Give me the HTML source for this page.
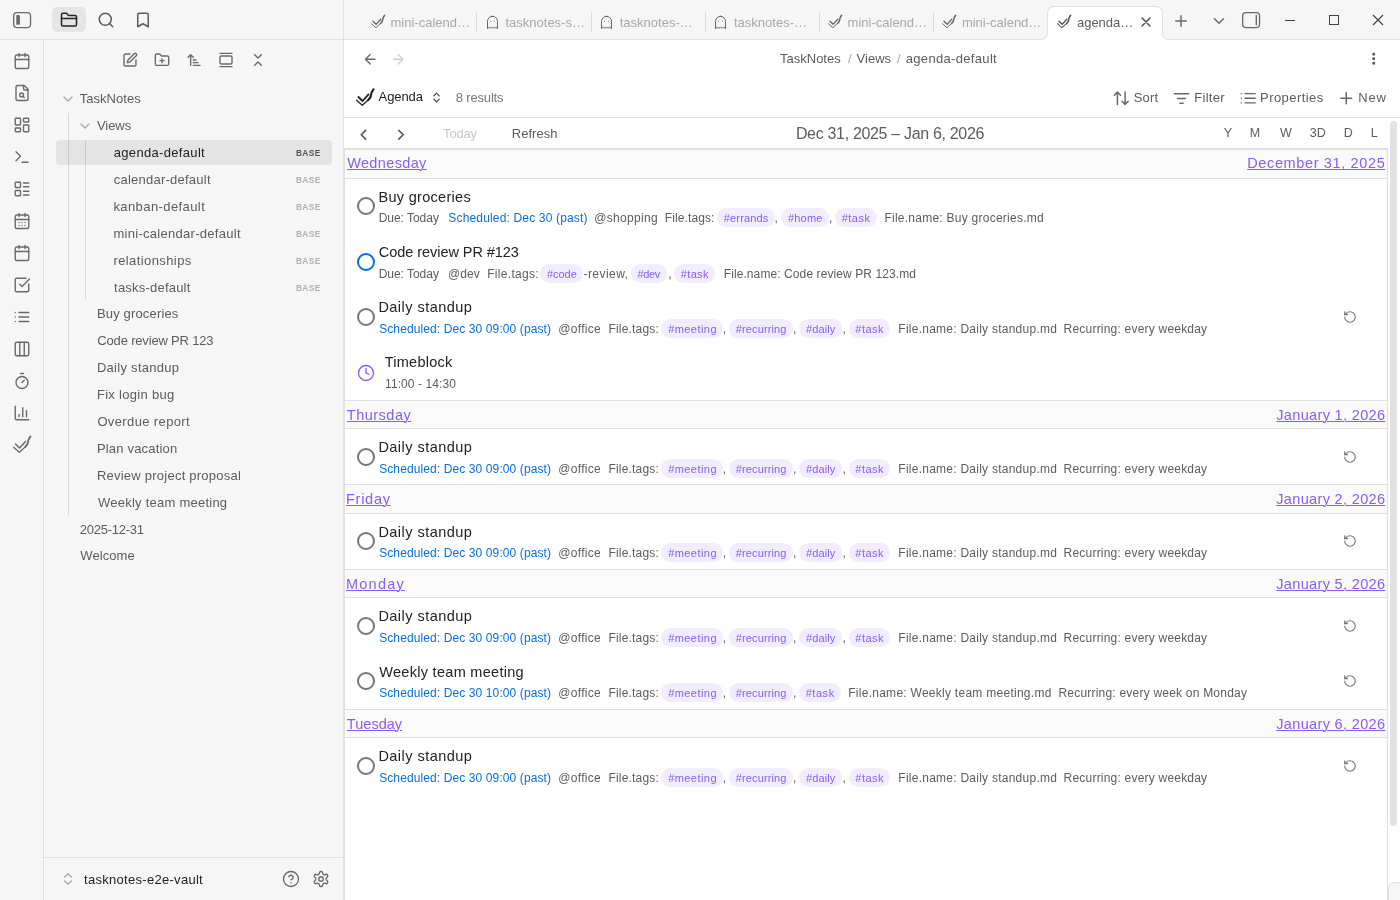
<!DOCTYPE html>
<html lang="en"><head><meta charset="utf-8"><title>agenda-default - TaskNotes</title>
<style>
*{margin:0;padding:0;box-sizing:border-box}
html,body{width:1400px;height:900px;overflow:hidden;background:#fff;font-family:"Liberation Sans",sans-serif}
.a{position:absolute}
.t{position:absolute;white-space:nowrap;line-height:1}
svg.i{position:absolute;fill:none;stroke:currentColor;stroke-linecap:round;stroke-linejoin:round;overflow:visible}
</style></head><body><div class="app" style="position:absolute;left:0;top:0;width:1400px;height:900px;overflow:hidden;will-change:transform">
<div class="a" style="left:0px;top:0px;width:344px;height:900px;background:#f6f6f6"></div>
<div class="a" style="left:344px;top:0px;width:1056px;height:40px;background:#f6f6f6"></div>
<div class="a" style="left:0px;top:39px;width:1400px;height:1px;background:#e0e0e0"></div>
<div class="a" style="left:43px;top:40px;width:1px;height:860px;background:#e0e0e0"></div>
<div class="a" style="left:343px;top:0px;width:1px;height:900px;background:#e0e0e0"></div>
<div class="a" style="left:44px;top:857px;width:299px;height:1px;background:#e0e0e0"></div>
<svg class="i" style="left:13px;top:12px;color:#6a6a6a" width="18" height="16" viewBox="0 0 18 16"><rect x="0.65" y="0.65" width="16.9" height="14.9" rx="3.2" stroke-width="1.3"/><rect x="3.3" y="3.1" width="3.6" height="9.7" rx="0.9" fill="#6a6a6a" stroke="none"/></svg>
<div class="a" style="left:52px;top:7px;width:34px;height:25px;background:#e5e5e5;border-radius:5px"></div>
<svg class="i" style="left:60px;top:11px;color:#222;" width="18" height="18" viewBox="0 0 24 24" stroke-width="2"><path d="M20 20a2 2 0 0 0 2-2V8a2 2 0 0 0-2-2h-7.9a2 2 0 0 1-1.69-.9L9.6 3.9A2 2 0 0 0 7.93 3H4a2 2 0 0 0-2 2v13a2 2 0 0 0 2 2Z"/><path d="M2 10h20"/></svg>
<svg class="i" style="left:97px;top:11px;color:#5c5c5c;" width="18" height="18" viewBox="0 0 24 24" stroke-width="2"><circle cx="11" cy="11" r="8"/><path d="m21 21-4.3-4.3"/></svg>
<svg class="i" style="left:134px;top:11px;color:#5c5c5c;" width="18" height="18" viewBox="0 0 24 24" stroke-width="2"><path d="m19 21-7-4-7 4V5a2 2 0 0 1 2-2h10a2 2 0 0 1 2 2v16z"/></svg>
<svg class="i" style="left:13px;top:51.5px;color:#6a6a6a;" width="18" height="18" viewBox="0 0 24 24" stroke-width="1.85"><rect x="3" y="4" width="18" height="18" rx="2"/><path d="M16 2v4M8 2v4M3 10h18"/></svg>
<svg class="i" style="left:13px;top:83.5px;color:#6a6a6a;" width="18" height="18" viewBox="0 0 24 24" stroke-width="1.85"><path d="M15 2H6a2 2 0 0 0-2 2v16a2 2 0 0 0 2 2h12a2 2 0 0 0 2-2V7Z"/><path d="M14 2v4a2 2 0 0 0 2 2h4"/><circle cx="11.5" cy="14.5" r="2.5"/><path d="M13.3 16.3 15 18"/></svg>
<svg class="i" style="left:13px;top:115.5px;color:#6a6a6a;" width="18" height="18" viewBox="0 0 24 24" stroke-width="1.85"><rect x="3" y="3" width="7" height="9" rx="1"/><rect x="14" y="3" width="7" height="5" rx="1"/><rect x="14" y="12" width="7" height="9" rx="1"/><rect x="3" y="16" width="7" height="5" rx="1"/></svg>
<svg class="i" style="left:13px;top:147.5px;color:#6a6a6a;" width="18" height="18" viewBox="0 0 24 24" stroke-width="1.85"><path d="M4 17l6-6-6-6M12 19h8"/></svg>
<svg class="i" style="left:13px;top:179.5px;color:#6a6a6a;" width="18" height="18" viewBox="0 0 24 24" stroke-width="1.85"><rect x="3" y="3" width="7" height="7" rx="1"/><rect x="3" y="14" width="7" height="7" rx="1"/><path d="M14 4h7M14 9h7M14 15h7M14 20h7"/></svg>
<svg class="i" style="left:13px;top:211.5px;color:#6a6a6a;" width="18" height="18" viewBox="0 0 24 24" stroke-width="1.85"><rect x="3" y="4" width="18" height="18" rx="2"/><path d="M16 2v4M8 2v4M3 10h18"/><path d="M8 14h.01M12 14h.01M16 14h.01M8 18h.01M12 18h.01M16 18h.01"/></svg>
<svg class="i" style="left:13px;top:243.5px;color:#6a6a6a;" width="18" height="18" viewBox="0 0 24 24" stroke-width="1.85"><rect x="3" y="4" width="18" height="18" rx="2"/><path d="M16 2v4M8 2v4M3 10h18"/></svg>
<svg class="i" style="left:13px;top:275.5px;color:#6a6a6a;" width="18" height="18" viewBox="0 0 24 24" stroke-width="1.85"><path d="M21 10.5V19a2 2 0 0 1-2 2H5a2 2 0 0 1-2-2V5a2 2 0 0 1 2-2h12.5"/><path d="m9 11 3 3L22 4"/></svg>
<svg class="i" style="left:13px;top:307.5px;color:#6a6a6a;" width="18" height="18" viewBox="0 0 24 24" stroke-width="1.85"><path d="M3 12h.01M3 18h.01M3 6h.01M8 12h13M8 18h13M8 6h13"/></svg>
<svg class="i" style="left:13px;top:339.5px;color:#6a6a6a;" width="18" height="18" viewBox="0 0 24 24" stroke-width="1.85"><rect x="3" y="3" width="18" height="18" rx="2"/><path d="M9 3v18M15 3v18"/></svg>
<svg class="i" style="left:13px;top:371.5px;color:#6a6a6a;" width="18" height="18" viewBox="0 0 24 24" stroke-width="1.85"><path d="M10 2h4M12 14l3-3"/><circle cx="12" cy="14" r="8"/></svg>
<svg class="i" style="left:13px;top:403.5px;color:#6a6a6a;" width="18" height="18" viewBox="0 0 24 24" stroke-width="1.85"><path d="M3 3v16a2 2 0 0 0 2 2h16M18 17V9M13 17V5M8 17v-3"/></svg>
<svg class="i" style="left:13px;top:436.2px;color:#6a6a6a" width="18" height="17.00" viewBox="0 0 18 17"><path d="M0.6 11.2 L6.3 16.3 L12.5 10.7" stroke-width="1.20"/><path d="M12.3 10.9 C14.2 9.0 15.1 7.6 15.0 6.0 C14.9 4.6 15.6 2.9 17.5 0.4" stroke-width="1.87"/><path d="M2.5 8.0 L6.6 12.0 L12.5 5.4" stroke-width="1.53"/></svg>
<svg class="i" style="left:122.1px;top:51.8px;color:#6a6a6a;" width="16" height="16" viewBox="0 0 24 24" stroke-width="2.1"><path d="M12 3H5a2 2 0 0 0-2 2v14a2 2 0 0 0 2 2h14a2 2 0 0 0 2-2v-7"/><path d="M18.375 2.625a1 1 0 0 1 3 3l-9.013 9.014a2 2 0 0 1-.853.505l-2.873.84a.5.5 0 0 1-.62-.62l.84-2.873a2 2 0 0 1 .506-.852z"/></svg>
<svg class="i" style="left:154.1px;top:51.8px;color:#6a6a6a;" width="16" height="16" viewBox="0 0 24 24" stroke-width="2.1"><path d="M12 10v6M9 13h6"/><path d="M20 20a2 2 0 0 0 2-2V8a2 2 0 0 0-2-2h-7.9a2 2 0 0 1-1.69-.9L9.6 3.9A2 2 0 0 0 7.93 3H4a2 2 0 0 0-2 2v13a2 2 0 0 0 2 2Z"/></svg>
<svg class="i" style="left:186.1px;top:51.8px;color:#6a6a6a;" width="16" height="16" viewBox="0 0 24 24" stroke-width="2.1"><path d="m3 8 4-4 4 4M7 4v16M11 12h4M11 16h7M11 20h10"/></svg>
<svg class="i" style="left:218.1px;top:51.8px;color:#6a6a6a;" width="16" height="16" viewBox="0 0 24 24" stroke-width="2.1"><path d="M3 2h18M3 22h18"/><rect x="3" y="6" width="18" height="12" rx="2"/></svg>
<svg class="i" style="left:250.1px;top:51.8px;color:#6a6a6a;" width="16" height="16" viewBox="0 0 24 24" stroke-width="2.1"><path d="m7 20 5-5 5 5M7 4l5 5 5-5"/></svg>
<svg class="i" style="left:60px;top:91.3px;color:#b0b0b0;" width="16" height="16" viewBox="0 0 24 24" stroke-width="2.3"><path d="m6 9 6 6 6-6"/></svg>
<div class="t" style="left:79.71px;top:91.99px;font-size:13px;color:#5c5c5c;letter-spacing:0.041px;">TaskNotes</div>
<svg class="i" style="left:77px;top:118.3px;color:#b0b0b0;" width="16" height="16" viewBox="0 0 24 24" stroke-width="2.3"><path d="m6 9 6 6 6-6"/></svg>
<div class="t" style="left:96.94px;top:118.99px;font-size:13px;color:#5c5c5c;letter-spacing:-0.063px;">Views</div>
<div class="a" style="left:56px;top:140px;width:276px;height:25px;background:#e4e4e4;border-radius:4px"></div>
<div class="a" style="left:68px;top:113px;width:1px;height:402px;background:rgba(0,0,0,0.12)"></div>
<div class="a" style="left:85px;top:140px;width:1px;height:159px;background:rgba(0,0,0,0.12)"></div>
<div class="t" style="left:113.75px;top:145.59px;font-size:13px;color:#222222;letter-spacing:0.324px;">agenda-default</div>
<div class="t" style="left:295.94px;top:149.17px;font-size:8.3px;color:#555;letter-spacing:0.44px;font-weight:700;">BASE</div>
<div class="t" style="left:113.75px;top:172.59px;font-size:13px;color:#5c5c5c;letter-spacing:0.235px;">calendar-default</div>
<div class="t" style="left:295.94px;top:176.17px;font-size:8.3px;color:#b0b0b0;letter-spacing:0.44px;font-weight:700;">BASE</div>
<div class="t" style="left:113.42px;top:199.59px;font-size:13px;color:#5c5c5c;letter-spacing:0.412px;">kanban-default</div>
<div class="t" style="left:295.94px;top:203.17px;font-size:8.3px;color:#b0b0b0;letter-spacing:0.44px;font-weight:700;">BASE</div>
<div class="t" style="left:113.44px;top:226.59px;font-size:13px;color:#5c5c5c;letter-spacing:0.283px;">mini-calendar-default</div>
<div class="t" style="left:295.94px;top:230.17px;font-size:8.3px;color:#b0b0b0;letter-spacing:0.44px;font-weight:700;">BASE</div>
<div class="t" style="left:113.44px;top:253.59px;font-size:13px;color:#5c5c5c;letter-spacing:0.404px;">relationships</div>
<div class="t" style="left:295.94px;top:257.17px;font-size:8.3px;color:#b0b0b0;letter-spacing:0.44px;font-weight:700;">BASE</div>
<div class="t" style="left:114.10px;top:280.59px;font-size:13px;color:#5c5c5c;letter-spacing:0.207px;">tasks-default</div>
<div class="t" style="left:295.94px;top:284.17px;font-size:8.3px;color:#b0b0b0;letter-spacing:0.44px;font-weight:700;">BASE</div>
<div class="t" style="left:96.93px;top:307.19px;font-size:13px;color:#5c5c5c;letter-spacing:0.163px;">Buy groceries</div>
<div class="t" style="left:97.34px;top:334.19px;font-size:13px;color:#5c5c5c;letter-spacing:-0.176px;">Code review PR 123</div>
<div class="t" style="left:96.93px;top:361.19px;font-size:13px;color:#5c5c5c;letter-spacing:0.279px;">Daily standup</div>
<div class="t" style="left:96.93px;top:388.19px;font-size:13px;color:#5c5c5c;letter-spacing:0.3px;">Fix login bug</div>
<div class="t" style="left:97.38px;top:415.19px;font-size:13px;color:#5c5c5c;letter-spacing:0.375px;">Overdue report</div>
<div class="t" style="left:96.93px;top:442.19px;font-size:13px;color:#5c5c5c;letter-spacing:0.188px;">Plan vacation</div>
<div class="t" style="left:96.93px;top:469.19px;font-size:13px;color:#5c5c5c;letter-spacing:0.236px;">Review project proposal</div>
<div class="t" style="left:97.94px;top:496.19px;font-size:13px;color:#5c5c5c;letter-spacing:0.245px;">Weekly team meeting</div>
<div class="t" style="left:79.75px;top:522.89px;font-size:13px;color:#5c5c5c;letter-spacing:-0.245px;">2025-12-31</div>
<div class="t" style="left:80.34px;top:548.59px;font-size:13px;color:#5c5c5c;letter-spacing:0.076px;">Welcome</div>
<svg class="i" style="left:60px;top:871px;color:#ababab;" width="16" height="16" viewBox="0 0 24 24" stroke-width="2"><path d="m7 15 5 5 5-5M7 9l5-5 5 5"/></svg>
<div class="t" style="left:84.10px;top:872.99px;font-size:13px;color:#222222;letter-spacing:0.286px;">tasknotes-e2e-vault</div>
<svg class="i" style="left:282px;top:870px;color:#6a6a6a;" width="18" height="18" viewBox="0 0 24 24" stroke-width="1.8"><circle cx="12" cy="12" r="10"/><path d="M9.09 9a3 3 0 0 1 5.83 1c0 2-3 3-3 3M12 17h.01"/></svg>
<svg class="i" style="left:312px;top:870px;color:#6a6a6a;" width="18" height="18" viewBox="0 0 24 24" stroke-width="1.8"><path d="M12.22 2h-.44a2 2 0 0 0-2 2v.18a2 2 0 0 1-1 1.73l-.43.25a2 2 0 0 1-2 0l-.15-.08a2 2 0 0 0-2.73.73l-.22.38a2 2 0 0 0 .73 2.73l.15.1a2 2 0 0 1 1 1.72v.51a2 2 0 0 1-1 1.74l-.15.09a2 2 0 0 0-.73 2.73l.22.38a2 2 0 0 0 2.73.73l.15-.08a2 2 0 0 1 2 0l.43.25a2 2 0 0 1 1 1.73V20a2 2 0 0 0 2 2h.44a2 2 0 0 0 2-2v-.18a2 2 0 0 1 1-1.73l.43-.25a2 2 0 0 1 2 0l.15.08a2 2 0 0 0 2.73-.73l.22-.39a2 2 0 0 0-.73-2.73l-.15-.08a2 2 0 0 1-1-1.74v-.5a2 2 0 0 1 1-1.74l.15-.09a2 2 0 0 0 .73-2.73l-.22-.38a2 2 0 0 0-2.73-.73l-.15.08a2 2 0 0 1-2 0l-.43-.25a2 2 0 0 1-1-1.73V4a2 2 0 0 0-2-2z"/><circle cx="12" cy="12" r="3"/></svg>
<svg class="i" style="left:371.0px;top:15.1px;color:#666" width="14" height="13.22" viewBox="0 0 18 17"><path d="M0.6 11.2 L6.3 16.3 L12.5 10.7" stroke-width="1.22"/><path d="M12.3 10.9 C14.2 9.0 15.1 7.6 15.0 6.0 C14.9 4.6 15.6 2.9 17.5 0.4" stroke-width="2.05"/><path d="M2.5 8.0 L6.6 12.0 L12.5 5.4" stroke-width="1.68"/></svg>
<div class="t" style="left:390.54px;top:15.89px;font-size:13px;color:#a8a8a8;">mini-calend…</div>
<div class="a" style="left:476px;top:12px;width:1px;height:20px;background:#dadada"></div>
<svg class="i" style="left:484.57px;top:14.6px;color:#666;" width="15" height="15" viewBox="0 0 24 24" stroke-width="1.6"><path d="M9 10h.01M15 10h.01"/><path d="M12 2a8 8 0 0 0-8 8v12l3-3 2.5 2.5L12 19l2.5 2.5L17 19l3 3V10a8 8 0 0 0-8-8z"/></svg>
<div class="t" style="left:505.47px;top:15.89px;font-size:13px;color:#a8a8a8;">tasknotes-s…</div>
<div class="a" style="left:591px;top:12px;width:1px;height:20px;background:#dadada"></div>
<svg class="i" style="left:598.84px;top:14.6px;color:#666;" width="15" height="15" viewBox="0 0 24 24" stroke-width="1.6"><path d="M9 10h.01M15 10h.01"/><path d="M12 2a8 8 0 0 0-8 8v12l3-3 2.5 2.5L12 19l2.5 2.5L17 19l3 3V10a8 8 0 0 0-8-8z"/></svg>
<div class="t" style="left:619.74px;top:15.89px;font-size:13px;color:#a8a8a8;">tasknotes-…</div>
<div class="a" style="left:705px;top:12px;width:1px;height:20px;background:#dadada"></div>
<svg class="i" style="left:713.1100000000001px;top:14.6px;color:#666;" width="15" height="15" viewBox="0 0 24 24" stroke-width="1.6"><path d="M9 10h.01M15 10h.01"/><path d="M12 2a8 8 0 0 0-8 8v12l3-3 2.5 2.5L12 19l2.5 2.5L17 19l3 3V10a8 8 0 0 0-8-8z"/></svg>
<div class="t" style="left:734.01px;top:15.89px;font-size:13px;color:#a8a8a8;">tasknotes-…</div>
<div class="a" style="left:819px;top:12px;width:1px;height:20px;background:#dadada"></div>
<svg class="i" style="left:828.08px;top:15.1px;color:#666" width="14" height="13.22" viewBox="0 0 18 17"><path d="M0.6 11.2 L6.3 16.3 L12.5 10.7" stroke-width="1.22"/><path d="M12.3 10.9 C14.2 9.0 15.1 7.6 15.0 6.0 C14.9 4.6 15.6 2.9 17.5 0.4" stroke-width="2.05"/><path d="M2.5 8.0 L6.6 12.0 L12.5 5.4" stroke-width="1.68"/></svg>
<div class="t" style="left:847.62px;top:15.89px;font-size:13px;color:#a8a8a8;">mini-calend…</div>
<div class="a" style="left:933px;top:12px;width:1px;height:20px;background:#dadada"></div>
<svg class="i" style="left:942.35px;top:15.1px;color:#666" width="14" height="13.22" viewBox="0 0 18 17"><path d="M0.6 11.2 L6.3 16.3 L12.5 10.7" stroke-width="1.22"/><path d="M12.3 10.9 C14.2 9.0 15.1 7.6 15.0 6.0 C14.9 4.6 15.6 2.9 17.5 0.4" stroke-width="2.05"/><path d="M2.5 8.0 L6.6 12.0 L12.5 5.4" stroke-width="1.68"/></svg>
<div class="t" style="left:961.89px;top:15.89px;font-size:13px;color:#a8a8a8;">mini-calend…</div>
<div class="a" style="left:1040px;top:33px;width:8px;height:7px;background:#fff"></div>
<div class="a" style="left:1040px;top:33px;width:8px;height:7px;background:#f6f6f6;border-right:1px solid #e0e0e0;border-bottom:1px solid #e0e0e0;border-bottom-right-radius:7px;box-sizing:border-box"></div>
<div class="a" style="left:1162px;top:33px;width:8px;height:7px;background:#fff"></div>
<div class="a" style="left:1162px;top:33px;width:8px;height:7px;background:#f6f6f6;border-left:1px solid #e0e0e0;border-bottom:1px solid #e0e0e0;border-bottom-left-radius:7px;box-sizing:border-box"></div>
<div class="a" style="left:1047px;top:6px;width:116px;height:28px;background:#fff;border:1px solid #e0e0e0;border-bottom:none;border-radius:7px 7px 0 0;box-sizing:border-box"></div>
<div class="a" style="left:1048px;top:33px;width:114px;height:7px;background:#fff"></div>
<svg class="i" style="left:1057px;top:15.1px;color:#555" width="14" height="13.22" viewBox="0 0 18 17"><path d="M0.6 11.2 L6.3 16.3 L12.5 10.7" stroke-width="1.29"/><path d="M12.3 10.9 C14.2 9.0 15.1 7.6 15.0 6.0 C14.9 4.6 15.6 2.9 17.5 0.4" stroke-width="2.12"/><path d="M2.5 8.0 L6.6 12.0 L12.5 5.4" stroke-width="1.74"/></svg>
<div class="t" style="left:1077.05px;top:15.89px;font-size:13px;color:#5c5c5c;letter-spacing:-0.044px;">agenda…</div>
<svg class="i" style="left:1138px;top:14px;color:#444;" width="16" height="16" viewBox="0 0 24 24" stroke-width="2"><path d="M18 6 6 18M6 6l12 12"/></svg>
<svg class="i" style="left:1172px;top:12px;color:#6a6a6a;" width="18" height="18" viewBox="0 0 24 24" stroke-width="2"><path d="M5 12h14M12 5v14"/></svg>
<svg class="i" style="left:1210px;top:12px;color:#6a6a6a;" width="18" height="18" viewBox="0 0 24 24" stroke-width="2"><path d="m6 9 6 6 6-6"/></svg>
<svg class="i" style="left:1242px;top:12px;color:#6a6a6a" width="18" height="16" viewBox="0 0 18 16"><rect x="0.65" y="0.65" width="16.9" height="14.9" rx="3.2" stroke-width="1.3"/><path d="M14.3 3.4v9.3" stroke-width="1.4"/></svg>
<div class="a" style="left:1285px;top:20px;width:10px;height:1px;background:#444"></div>
<div class="a" style="left:1329px;top:15px;width:10px;height:10px;border:1px solid #444;box-sizing:border-box"></div>
<svg class="i" style="left:1372px;top:14px;color:#444" width="12" height="12" viewBox="0 0 12 12"><path d="M1 1 11 11M11 1 1 11" stroke-width="1.2" stroke-linecap="butt"/></svg>
<svg class="i" style="left:361.7px;top:50.5px;color:#6a6a6a;" width="16.5" height="16.5" viewBox="0 0 24 24" stroke-width="1.9"><path d="m12 19-7-7 7-7M19 12H5"/></svg>
<svg class="i" style="left:389.7px;top:50.5px;color:#cfcfcf;" width="16.5" height="16.5" viewBox="0 0 24 24" stroke-width="1.9"><path d="M5 12h14M12 5l7 7-7 7"/></svg>
<div class="t" style="left:780.01px;top:51.99px;font-size:13px;color:#5c5c5c;letter-spacing:0.004px;">TaskNotes</div>
<div class="t" style="left:848.00px;top:51.99px;font-size:13px;color:#ababab;">/</div>
<div class="t" style="left:856.54px;top:51.99px;font-size:13px;color:#5c5c5c;letter-spacing:0.037px;">Views</div>
<div class="t" style="left:896.90px;top:51.99px;font-size:13px;color:#ababab;">/</div>
<div class="t" style="left:905.75px;top:51.99px;font-size:13px;color:#5c5c5c;letter-spacing:0.324px;">agenda-default</div>
<svg class="i" style="left:1366.25px;top:51.3px;color:#555;" width="15.5" height="15.5" viewBox="0 0 24 24" stroke-width="2.6"><circle cx="12" cy="12" r="1"/><circle cx="12" cy="5" r="1"/><circle cx="12" cy="19" r="1"/></svg>
<svg class="i" style="left:356px;top:89px;color:#222" width="18" height="17.00" viewBox="0 0 18 17"><path d="M0.6 11.2 L6.3 16.3 L12.5 10.7" stroke-width="1.30"/><path d="M12.3 10.9 C14.2 9.0 15.1 7.6 15.0 6.0 C14.9 4.6 15.6 2.9 17.5 0.4" stroke-width="2.20"/><path d="M2.5 8.0 L6.6 12.0 L12.5 5.4" stroke-width="1.80"/></svg>
<div class="t" style="left:378.57px;top:90.49px;font-size:13px;color:#222222;letter-spacing:-0.079px;">Agenda</div>
<svg class="i" style="left:430.4px;top:91.4px;color:#444;" width="13" height="13" viewBox="0 0 24 24" stroke-width="2.3"><path d="m7 15 5 5 5-5M7 9l5-5 5 5"/></svg>
<div class="t" style="left:455.74px;top:90.79px;font-size:13px;color:#777777;letter-spacing:-0.162px;">8 results</div>
<div class="a" style="left:344px;top:117px;width:1056px;height:1px;background:#e0e0e0"></div>
<svg class="i" style="left:1111.8px;top:89px;color:#666;" width="18.5" height="18.5" viewBox="0 0 24 24" stroke-width="1.9"><path d="m21 16-4 4-4-4M17 20V4M3 8l4-4 4 4M7 4v16"/></svg>
<div class="t" style="left:1133.71px;top:90.99px;font-size:13px;color:#5c5c5c;letter-spacing:0.148px;">Sort</div>
<svg class="i" style="left:1172.2px;top:88.6px;color:#666;" width="19" height="19" viewBox="0 0 24 24" stroke-width="1.9"><path d="M3 6h18M7 12h10M10 18h4"/></svg>
<div class="t" style="left:1194.33px;top:90.99px;font-size:13px;color:#5c5c5c;letter-spacing:0.259px;">Filter</div>
<svg class="i" style="left:1238.6px;top:88.8px;color:#666;" width="18.5" height="18.5" viewBox="0 0 24 24" stroke-width="1.9"><path d="M3 12h.01M3 18h.01M3 6h.01M8 12h13M8 18h13M8 6h13"/></svg>
<div class="t" style="left:1260.03px;top:90.99px;font-size:13px;color:#5c5c5c;letter-spacing:0.443px;">Properties</div>
<svg class="i" style="left:1337px;top:89px;color:#666;" width="18.5" height="18.5" viewBox="0 0 24 24" stroke-width="1.9"><path d="M5 12h14M12 5v14"/></svg>
<div class="t" style="left:1358.23px;top:90.99px;font-size:13px;color:#5c5c5c;letter-spacing:0.864px;">New</div>
<svg class="i" style="left:353.9px;top:124.7px;color:#555;stroke-linecap:butt;stroke-linejoin:miter;" width="19.5" height="19.5" viewBox="0 0 24 24" stroke-width="1.9"><path d="m15 18-6-6 6-6"/></svg>
<svg class="i" style="left:390.8px;top:124.7px;color:#555;stroke-linecap:butt;stroke-linejoin:miter;" width="19.5" height="19.5" viewBox="0 0 24 24" stroke-width="1.9"><path d="m9 18 6-6-6-6"/></svg>
<div class="t" style="left:443.11px;top:126.99px;font-size:13px;color:#c8c8c8;letter-spacing:-0.203px;">Today</div>
<div class="t" style="left:511.83px;top:126.99px;font-size:13px;color:#5c5c5c;letter-spacing:0.015px;">Refresh</div>
<div class="t" style="left:795.89px;top:125.65px;font-size:16px;color:#5c5c5c;letter-spacing:-0.323px;">Dec 31, 2025 – Jan 6, 2026</div>
<div class="t" style="left:1223.63px;top:127.12px;font-size:12.5px;color:#5c5c5c;">Y</div>
<div class="t" style="left:1249.87px;top:127.12px;font-size:12.5px;color:#5c5c5c;">M</div>
<div class="t" style="left:1279.95px;top:127.12px;font-size:12.5px;color:#5c5c5c;">W</div>
<div class="t" style="left:1309.82px;top:127.12px;font-size:12.5px;color:#5c5c5c;">3D</div>
<div class="t" style="left:1343.67px;top:127.12px;font-size:12.5px;color:#5c5c5c;">D</div>
<div class="t" style="left:1370.67px;top:127.12px;font-size:12.5px;color:#5c5c5c;">L</div>
<div class="a" style="left:344px;top:148px;width:1044px;height:2px;background:#e0e0e0"></div>
<div class="a" style="left:344px;top:150px;width:1px;height:750px;background:#e0e0e0"></div>
<div class="a" style="left:1387px;top:150px;width:1px;height:750px;background:#e0e0e0"></div>
<div class="a" style="left:1390px;top:121px;width:7px;height:705px;background:#e2e2e2;border-radius:4px"></div>
<div class="a" style="left:1388px;top:882px;width:12px;height:18px;background:#f6f6f6;border-top:1px solid #e0e0e0;border-left:1px solid #e0e0e0;border-top-left-radius:7px;box-sizing:border-box"></div>
<div class="a" style="left:345px;top:150px;width:1042px;height:28px;background:#fafafa"></div>
<div class="a" style="left:345px;top:178px;width:1042px;height:1px;background:#e0e0e0"></div>
<div class="t" style="left:347.14px;top:156.42px;font-size:14.5px;color:#8a5cf5;letter-spacing:0.365px;text-decoration:underline;text-underline-offset:1px;text-decoration-thickness:1px;">Wednesday</div>
<div class="t" style="left:1247.21px;top:156.42px;font-size:14.5px;color:#8a5cf5;letter-spacing:0.634px;text-decoration:underline;text-underline-offset:1px;text-decoration-thickness:1px;">December 31, 2025</div>
<div class="a" style="left:345px;top:400px;width:1042px;height:1px;background:#e0e0e0"></div>
<div class="a" style="left:345px;top:401px;width:1042px;height:27px;background:#fafafa"></div>
<div class="a" style="left:345px;top:428px;width:1042px;height:1px;background:#e0e0e0"></div>
<div class="t" style="left:346.87px;top:407.72px;font-size:14.5px;color:#8a5cf5;letter-spacing:0.487px;text-decoration:underline;text-underline-offset:1px;text-decoration-thickness:1px;">Thursday</div>
<div class="t" style="left:1276.27px;top:407.72px;font-size:14.5px;color:#8a5cf5;letter-spacing:0.341px;text-decoration:underline;text-underline-offset:1px;text-decoration-thickness:1px;">January 1, 2026</div>
<div class="a" style="left:345px;top:484px;width:1042px;height:1px;background:#e0e0e0"></div>
<div class="a" style="left:345px;top:485px;width:1042px;height:28px;background:#fafafa"></div>
<div class="a" style="left:345px;top:513px;width:1042px;height:1px;background:#e0e0e0"></div>
<div class="t" style="left:346.01px;top:491.92px;font-size:14.5px;color:#8a5cf5;letter-spacing:0.726px;text-decoration:underline;text-underline-offset:1px;text-decoration-thickness:1px;">Friday</div>
<div class="t" style="left:1276.27px;top:491.92px;font-size:14.5px;color:#8a5cf5;letter-spacing:0.341px;text-decoration:underline;text-underline-offset:1px;text-decoration-thickness:1px;">January 2, 2026</div>
<div class="a" style="left:345px;top:569px;width:1042px;height:1px;background:#e0e0e0"></div>
<div class="a" style="left:345px;top:570px;width:1042px;height:27px;background:#fafafa"></div>
<div class="a" style="left:345px;top:597px;width:1042px;height:1px;background:#e0e0e0"></div>
<div class="t" style="left:346.01px;top:576.72px;font-size:14.5px;color:#8a5cf5;letter-spacing:1.226px;text-decoration:underline;text-underline-offset:1px;text-decoration-thickness:1px;">Monday</div>
<div class="t" style="left:1276.27px;top:576.72px;font-size:14.5px;color:#8a5cf5;letter-spacing:0.341px;text-decoration:underline;text-underline-offset:1px;text-decoration-thickness:1px;">January 5, 2026</div>
<div class="a" style="left:345px;top:709px;width:1042px;height:1px;background:#e0e0e0"></div>
<div class="a" style="left:345px;top:710px;width:1042px;height:27px;background:#fafafa"></div>
<div class="a" style="left:345px;top:737px;width:1042px;height:1px;background:#e0e0e0"></div>
<div class="t" style="left:346.87px;top:716.72px;font-size:14.5px;color:#8a5cf5;letter-spacing:0.023px;text-decoration:underline;text-underline-offset:1px;text-decoration-thickness:1px;">Tuesday</div>
<div class="t" style="left:1276.27px;top:716.72px;font-size:14.5px;color:#8a5cf5;letter-spacing:0.341px;text-decoration:underline;text-underline-offset:1px;text-decoration-thickness:1px;">January 6, 2026</div>
<div class="a" style="left:357px;top:197.0px;width:18px;height:18px;border:2px solid #777777;border-radius:50%;box-sizing:border-box"></div>
<div class="t" style="left:378.41px;top:189.72px;font-size:14.5px;color:#222222;letter-spacing:0.305px;">Buy groceries</div>
<div class="t" style="left:378.72px;top:211.84px;font-size:12px;color:#5c5c5c;letter-spacing:-0.036px;">Due: Today</div>
<div class="t" style="left:448.36px;top:211.84px;font-size:12px;color:#086ddd;letter-spacing:0.16px;">Scheduled: Dec 30 (past)</div>
<div class="t" style="left:594.36px;top:211.84px;font-size:12px;color:#5c5c5c;letter-spacing:0.291px;">@shopping</div>
<div class="t" style="left:664.72px;top:211.84px;font-size:12px;color:#5c5c5c;letter-spacing:0.111px;">File.tags:</div>
<div class="a" style="left:717.1px;top:208.0px;width:57.5px;height:19px;background:#f1edfe;border-radius:10px"></div>
<div class="t" style="left:723.85px;top:212.99px;font-size:11px;color:#8a5cf5;letter-spacing:0.133px;">#errands</div>
<div class="t" style="left:774.42px;top:211.84px;font-size:12px;color:#5c5c5c;">,</div>
<div class="a" style="left:781.2px;top:208.0px;width:47.6px;height:19px;background:#f1edfe;border-radius:10px"></div>
<div class="t" style="left:787.95px;top:212.99px;font-size:11px;color:#8a5cf5;letter-spacing:0.226px;">#home</div>
<div class="t" style="left:829.12px;top:211.84px;font-size:12px;color:#5c5c5c;">,</div>
<div class="a" style="left:834.9px;top:208.0px;width:41.9px;height:19px;background:#f1edfe;border-radius:10px"></div>
<div class="t" style="left:841.65px;top:212.99px;font-size:11px;color:#8a5cf5;letter-spacing:0.51px;">#task</div>
<div class="t" style="left:884.42px;top:211.84px;font-size:12px;color:#5c5c5c;letter-spacing:0.251px;">File.name: Buy groceries.md</div>
<div class="a" style="left:357px;top:253.0px;width:18px;height:18px;border:2px solid #086ddd;border-radius:50%;box-sizing:border-box"></div>
<div class="t" style="left:378.86px;top:244.72px;font-size:14.5px;color:#222222;letter-spacing:-0.054px;">Code review PR #123</div>
<div class="t" style="left:378.72px;top:267.84px;font-size:12px;color:#5c5c5c;letter-spacing:-0.036px;">Due: Today</div>
<div class="t" style="left:448.06px;top:267.84px;font-size:12px;color:#5c5c5c;letter-spacing:0.018px;">@dev</div>
<div class="t" style="left:487.22px;top:267.84px;font-size:12px;color:#5c5c5c;letter-spacing:0.299px;">File.tags:</div>
<div class="a" style="left:540.3px;top:264.0px;width:42.8px;height:19px;background:#f1edfe;border-radius:10px"></div>
<div class="t" style="left:547.05px;top:268.99px;font-size:11px;color:#8a5cf5;letter-spacing:-0.058px;">#code</div>
<div class="t" style="left:583.47px;top:267.84px;font-size:12px;color:#5c5c5c;letter-spacing:0.444px;">-review,</div>
<div class="a" style="left:630.7px;top:264.0px;width:36.4px;height:19px;background:#f1edfe;border-radius:10px"></div>
<div class="t" style="left:637.45px;top:268.99px;font-size:11px;color:#8a5cf5;letter-spacing:-0.322px;">#dev</div>
<div class="t" style="left:668.22px;top:267.84px;font-size:12px;color:#5c5c5c;">,</div>
<div class="a" style="left:674.0px;top:264.0px;width:41.3px;height:19px;background:#f1edfe;border-radius:10px"></div>
<div class="t" style="left:680.75px;top:268.99px;font-size:11px;color:#8a5cf5;letter-spacing:0.36px;">#task</div>
<div class="t" style="left:723.72px;top:267.84px;font-size:12px;color:#5c5c5c;letter-spacing:0.092px;">File.name: Code review PR 123.md</div>
<div class="a" style="left:357px;top:308.0px;width:18px;height:18px;border:2px solid #777777;border-radius:50%;box-sizing:border-box"></div>
<div class="t" style="left:378.41px;top:299.72px;font-size:14.5px;color:#222222;letter-spacing:0.462px;">Daily standup</div>
<div class="t" style="left:379.16px;top:322.84px;font-size:12px;color:#086ddd;letter-spacing:0.107px;">Scheduled: Dec 30 09:00 (past)</div>
<div class="t" style="left:558.36px;top:322.84px;font-size:12px;color:#5c5c5c;letter-spacing:0.286px;">@office</div>
<div class="t" style="left:608.42px;top:322.84px;font-size:12px;color:#5c5c5c;letter-spacing:0.199px;">File.tags:</div>
<div class="a" style="left:661.4px;top:319.0px;width:61.2px;height:19px;background:#f1edfe;border-radius:10px"></div>
<div class="t" style="left:668.15px;top:323.99px;font-size:11px;color:#8a5cf5;letter-spacing:0.444px;">#meeting</div>
<div class="t" style="left:722.82px;top:322.84px;font-size:12px;color:#5c5c5c;">,</div>
<div class="a" style="left:729.0px;top:319.0px;width:63.5px;height:19px;background:#f1edfe;border-radius:10px"></div>
<div class="t" style="left:735.75px;top:323.99px;font-size:11px;color:#8a5cf5;letter-spacing:0.126px;">#recurring</div>
<div class="t" style="left:792.92px;top:322.84px;font-size:12px;color:#5c5c5c;">,</div>
<div class="a" style="left:799.2px;top:319.0px;width:42.9px;height:19px;background:#f1edfe;border-radius:10px"></div>
<div class="t" style="left:805.95px;top:323.99px;font-size:11px;color:#8a5cf5;letter-spacing:0.126px;">#daily</div>
<div class="t" style="left:842.42px;top:322.84px;font-size:12px;color:#5c5c5c;">,</div>
<div class="a" style="left:848.6px;top:319.0px;width:41.6px;height:19px;background:#f1edfe;border-radius:10px"></div>
<div class="t" style="left:855.35px;top:323.99px;font-size:11px;color:#8a5cf5;letter-spacing:0.435px;">#task</div>
<div class="t" style="left:898.32px;top:322.84px;font-size:12px;color:#5c5c5c;letter-spacing:0.25px;">File.name: Daily standup.md</div>
<div class="t" style="left:1063.62px;top:322.84px;font-size:12px;color:#5c5c5c;letter-spacing:0.208px;">Recurring: every weekday</div>
<svg class="i" style="left:1342.8px;top:310px;color:#777;" width="14" height="14" viewBox="0 0 24 24" stroke-width="2"><path d="M3 12a9 9 0 1 0 9-9 9.75 9.75 0 0 0-6.74 2.74L3 8"/><path d="M3 3v5h5"/></svg>
<svg class="i" style="left:357px;top:363.7px;color:#8a5cf5;" width="18" height="18" viewBox="0 0 24 24" stroke-width="1.8"><circle cx="12" cy="12" r="10"/><path d="M12 6v6l4 2"/></svg>
<div class="t" style="left:384.77px;top:354.72px;font-size:14.5px;color:#222222;letter-spacing:0.242px;">Timeblock</div>
<div class="t" style="left:385.09px;top:377.84px;font-size:12px;color:#5c5c5c;letter-spacing:0.08px;">11:00 - 14:30</div>
<div class="a" style="left:357px;top:448.0px;width:18px;height:18px;border:2px solid #777777;border-radius:50%;box-sizing:border-box"></div>
<div class="t" style="left:378.41px;top:439.72px;font-size:14.5px;color:#222222;letter-spacing:0.462px;">Daily standup</div>
<div class="t" style="left:379.16px;top:462.84px;font-size:12px;color:#086ddd;letter-spacing:0.107px;">Scheduled: Dec 30 09:00 (past)</div>
<div class="t" style="left:558.36px;top:462.84px;font-size:12px;color:#5c5c5c;letter-spacing:0.286px;">@office</div>
<div class="t" style="left:608.42px;top:462.84px;font-size:12px;color:#5c5c5c;letter-spacing:0.199px;">File.tags:</div>
<div class="a" style="left:661.4px;top:459.0px;width:61.2px;height:19px;background:#f1edfe;border-radius:10px"></div>
<div class="t" style="left:668.15px;top:463.99px;font-size:11px;color:#8a5cf5;letter-spacing:0.444px;">#meeting</div>
<div class="t" style="left:722.82px;top:462.84px;font-size:12px;color:#5c5c5c;">,</div>
<div class="a" style="left:729.0px;top:459.0px;width:63.5px;height:19px;background:#f1edfe;border-radius:10px"></div>
<div class="t" style="left:735.75px;top:463.99px;font-size:11px;color:#8a5cf5;letter-spacing:0.126px;">#recurring</div>
<div class="t" style="left:792.92px;top:462.84px;font-size:12px;color:#5c5c5c;">,</div>
<div class="a" style="left:799.2px;top:459.0px;width:42.9px;height:19px;background:#f1edfe;border-radius:10px"></div>
<div class="t" style="left:805.95px;top:463.99px;font-size:11px;color:#8a5cf5;letter-spacing:0.126px;">#daily</div>
<div class="t" style="left:842.42px;top:462.84px;font-size:12px;color:#5c5c5c;">,</div>
<div class="a" style="left:848.6px;top:459.0px;width:41.6px;height:19px;background:#f1edfe;border-radius:10px"></div>
<div class="t" style="left:855.35px;top:463.99px;font-size:11px;color:#8a5cf5;letter-spacing:0.435px;">#task</div>
<div class="t" style="left:898.32px;top:462.84px;font-size:12px;color:#5c5c5c;letter-spacing:0.25px;">File.name: Daily standup.md</div>
<div class="t" style="left:1063.62px;top:462.84px;font-size:12px;color:#5c5c5c;letter-spacing:0.208px;">Recurring: every weekday</div>
<svg class="i" style="left:1342.8px;top:450px;color:#777;" width="14" height="14" viewBox="0 0 24 24" stroke-width="2"><path d="M3 12a9 9 0 1 0 9-9 9.75 9.75 0 0 0-6.74 2.74L3 8"/><path d="M3 3v5h5"/></svg>
<div class="a" style="left:357px;top:532.0px;width:18px;height:18px;border:2px solid #777777;border-radius:50%;box-sizing:border-box"></div>
<div class="t" style="left:378.41px;top:524.72px;font-size:14.5px;color:#222222;letter-spacing:0.462px;">Daily standup</div>
<div class="t" style="left:379.16px;top:546.84px;font-size:12px;color:#086ddd;letter-spacing:0.107px;">Scheduled: Dec 30 09:00 (past)</div>
<div class="t" style="left:558.36px;top:546.84px;font-size:12px;color:#5c5c5c;letter-spacing:0.286px;">@office</div>
<div class="t" style="left:608.42px;top:546.84px;font-size:12px;color:#5c5c5c;letter-spacing:0.199px;">File.tags:</div>
<div class="a" style="left:661.4px;top:543.0px;width:61.2px;height:19px;background:#f1edfe;border-radius:10px"></div>
<div class="t" style="left:668.15px;top:547.99px;font-size:11px;color:#8a5cf5;letter-spacing:0.444px;">#meeting</div>
<div class="t" style="left:722.82px;top:546.84px;font-size:12px;color:#5c5c5c;">,</div>
<div class="a" style="left:729.0px;top:543.0px;width:63.5px;height:19px;background:#f1edfe;border-radius:10px"></div>
<div class="t" style="left:735.75px;top:547.99px;font-size:11px;color:#8a5cf5;letter-spacing:0.126px;">#recurring</div>
<div class="t" style="left:792.92px;top:546.84px;font-size:12px;color:#5c5c5c;">,</div>
<div class="a" style="left:799.2px;top:543.0px;width:42.9px;height:19px;background:#f1edfe;border-radius:10px"></div>
<div class="t" style="left:805.95px;top:547.99px;font-size:11px;color:#8a5cf5;letter-spacing:0.126px;">#daily</div>
<div class="t" style="left:842.42px;top:546.84px;font-size:12px;color:#5c5c5c;">,</div>
<div class="a" style="left:848.6px;top:543.0px;width:41.6px;height:19px;background:#f1edfe;border-radius:10px"></div>
<div class="t" style="left:855.35px;top:547.99px;font-size:11px;color:#8a5cf5;letter-spacing:0.435px;">#task</div>
<div class="t" style="left:898.32px;top:546.84px;font-size:12px;color:#5c5c5c;letter-spacing:0.25px;">File.name: Daily standup.md</div>
<div class="t" style="left:1063.62px;top:546.84px;font-size:12px;color:#5c5c5c;letter-spacing:0.208px;">Recurring: every weekday</div>
<svg class="i" style="left:1342.8px;top:534px;color:#777;" width="14" height="14" viewBox="0 0 24 24" stroke-width="2"><path d="M3 12a9 9 0 1 0 9-9 9.75 9.75 0 0 0-6.74 2.74L3 8"/><path d="M3 3v5h5"/></svg>
<div class="a" style="left:357px;top:617.0px;width:18px;height:18px;border:2px solid #777777;border-radius:50%;box-sizing:border-box"></div>
<div class="t" style="left:378.41px;top:608.72px;font-size:14.5px;color:#222222;letter-spacing:0.462px;">Daily standup</div>
<div class="t" style="left:379.16px;top:631.84px;font-size:12px;color:#086ddd;letter-spacing:0.107px;">Scheduled: Dec 30 09:00 (past)</div>
<div class="t" style="left:558.36px;top:631.84px;font-size:12px;color:#5c5c5c;letter-spacing:0.286px;">@office</div>
<div class="t" style="left:608.42px;top:631.84px;font-size:12px;color:#5c5c5c;letter-spacing:0.199px;">File.tags:</div>
<div class="a" style="left:661.4px;top:628.0px;width:61.2px;height:19px;background:#f1edfe;border-radius:10px"></div>
<div class="t" style="left:668.15px;top:632.99px;font-size:11px;color:#8a5cf5;letter-spacing:0.444px;">#meeting</div>
<div class="t" style="left:722.82px;top:631.84px;font-size:12px;color:#5c5c5c;">,</div>
<div class="a" style="left:729.0px;top:628.0px;width:63.5px;height:19px;background:#f1edfe;border-radius:10px"></div>
<div class="t" style="left:735.75px;top:632.99px;font-size:11px;color:#8a5cf5;letter-spacing:0.126px;">#recurring</div>
<div class="t" style="left:792.92px;top:631.84px;font-size:12px;color:#5c5c5c;">,</div>
<div class="a" style="left:799.2px;top:628.0px;width:42.9px;height:19px;background:#f1edfe;border-radius:10px"></div>
<div class="t" style="left:805.95px;top:632.99px;font-size:11px;color:#8a5cf5;letter-spacing:0.126px;">#daily</div>
<div class="t" style="left:842.42px;top:631.84px;font-size:12px;color:#5c5c5c;">,</div>
<div class="a" style="left:848.6px;top:628.0px;width:41.6px;height:19px;background:#f1edfe;border-radius:10px"></div>
<div class="t" style="left:855.35px;top:632.99px;font-size:11px;color:#8a5cf5;letter-spacing:0.435px;">#task</div>
<div class="t" style="left:898.32px;top:631.84px;font-size:12px;color:#5c5c5c;letter-spacing:0.25px;">File.name: Daily standup.md</div>
<div class="t" style="left:1063.62px;top:631.84px;font-size:12px;color:#5c5c5c;letter-spacing:0.208px;">Recurring: every weekday</div>
<svg class="i" style="left:1342.8px;top:619px;color:#777;" width="14" height="14" viewBox="0 0 24 24" stroke-width="2"><path d="M3 12a9 9 0 1 0 9-9 9.75 9.75 0 0 0-6.74 2.74L3 8"/><path d="M3 3v5h5"/></svg>
<div class="a" style="left:357px;top:672.0px;width:18px;height:18px;border:2px solid #777777;border-radius:50%;box-sizing:border-box"></div>
<div class="t" style="left:379.24px;top:664.72px;font-size:14.5px;color:#222222;letter-spacing:0.294px;">Weekly team meeting</div>
<div class="t" style="left:379.16px;top:686.84px;font-size:12px;color:#086ddd;letter-spacing:0.107px;">Scheduled: Dec 30 10:00 (past)</div>
<div class="t" style="left:558.36px;top:686.84px;font-size:12px;color:#5c5c5c;letter-spacing:0.286px;">@office</div>
<div class="t" style="left:608.42px;top:686.84px;font-size:12px;color:#5c5c5c;letter-spacing:0.199px;">File.tags:</div>
<div class="a" style="left:661.4px;top:683.0px;width:61.2px;height:19px;background:#f1edfe;border-radius:10px"></div>
<div class="t" style="left:668.15px;top:687.99px;font-size:11px;color:#8a5cf5;letter-spacing:0.444px;">#meeting</div>
<div class="t" style="left:722.82px;top:686.84px;font-size:12px;color:#5c5c5c;">,</div>
<div class="a" style="left:729.0px;top:683.0px;width:63.5px;height:19px;background:#f1edfe;border-radius:10px"></div>
<div class="t" style="left:735.75px;top:687.99px;font-size:11px;color:#8a5cf5;letter-spacing:0.126px;">#recurring</div>
<div class="t" style="left:792.92px;top:686.84px;font-size:12px;color:#5c5c5c;">,</div>
<div class="a" style="left:798.9px;top:683.0px;width:42.1px;height:19px;background:#f1edfe;border-radius:10px"></div>
<div class="t" style="left:805.65px;top:687.99px;font-size:11px;color:#8a5cf5;letter-spacing:0.56px;">#task</div>
<div class="t" style="left:848.22px;top:686.84px;font-size:12px;color:#5c5c5c;letter-spacing:0.269px;">File.name: Weekly team meeting.md</div>
<div class="t" style="left:1058.42px;top:686.84px;font-size:12px;color:#5c5c5c;letter-spacing:0.214px;">Recurring: every week on Monday</div>
<svg class="i" style="left:1342.8px;top:674px;color:#777;" width="14" height="14" viewBox="0 0 24 24" stroke-width="2"><path d="M3 12a9 9 0 1 0 9-9 9.75 9.75 0 0 0-6.74 2.74L3 8"/><path d="M3 3v5h5"/></svg>
<div class="a" style="left:357px;top:757.0px;width:18px;height:18px;border:2px solid #777777;border-radius:50%;box-sizing:border-box"></div>
<div class="t" style="left:378.41px;top:748.72px;font-size:14.5px;color:#222222;letter-spacing:0.462px;">Daily standup</div>
<div class="t" style="left:379.16px;top:771.84px;font-size:12px;color:#086ddd;letter-spacing:0.107px;">Scheduled: Dec 30 09:00 (past)</div>
<div class="t" style="left:558.36px;top:771.84px;font-size:12px;color:#5c5c5c;letter-spacing:0.286px;">@office</div>
<div class="t" style="left:608.42px;top:771.84px;font-size:12px;color:#5c5c5c;letter-spacing:0.199px;">File.tags:</div>
<div class="a" style="left:661.4px;top:768.0px;width:61.2px;height:19px;background:#f1edfe;border-radius:10px"></div>
<div class="t" style="left:668.15px;top:772.99px;font-size:11px;color:#8a5cf5;letter-spacing:0.444px;">#meeting</div>
<div class="t" style="left:722.82px;top:771.84px;font-size:12px;color:#5c5c5c;">,</div>
<div class="a" style="left:729.0px;top:768.0px;width:63.5px;height:19px;background:#f1edfe;border-radius:10px"></div>
<div class="t" style="left:735.75px;top:772.99px;font-size:11px;color:#8a5cf5;letter-spacing:0.126px;">#recurring</div>
<div class="t" style="left:792.92px;top:771.84px;font-size:12px;color:#5c5c5c;">,</div>
<div class="a" style="left:799.2px;top:768.0px;width:42.9px;height:19px;background:#f1edfe;border-radius:10px"></div>
<div class="t" style="left:805.95px;top:772.99px;font-size:11px;color:#8a5cf5;letter-spacing:0.126px;">#daily</div>
<div class="t" style="left:842.42px;top:771.84px;font-size:12px;color:#5c5c5c;">,</div>
<div class="a" style="left:848.6px;top:768.0px;width:41.6px;height:19px;background:#f1edfe;border-radius:10px"></div>
<div class="t" style="left:855.35px;top:772.99px;font-size:11px;color:#8a5cf5;letter-spacing:0.435px;">#task</div>
<div class="t" style="left:898.32px;top:771.84px;font-size:12px;color:#5c5c5c;letter-spacing:0.25px;">File.name: Daily standup.md</div>
<div class="t" style="left:1063.62px;top:771.84px;font-size:12px;color:#5c5c5c;letter-spacing:0.208px;">Recurring: every weekday</div>
<svg class="i" style="left:1342.8px;top:759px;color:#777;" width="14" height="14" viewBox="0 0 24 24" stroke-width="2"><path d="M3 12a9 9 0 1 0 9-9 9.75 9.75 0 0 0-6.74 2.74L3 8"/><path d="M3 3v5h5"/></svg>
</div></body></html>
